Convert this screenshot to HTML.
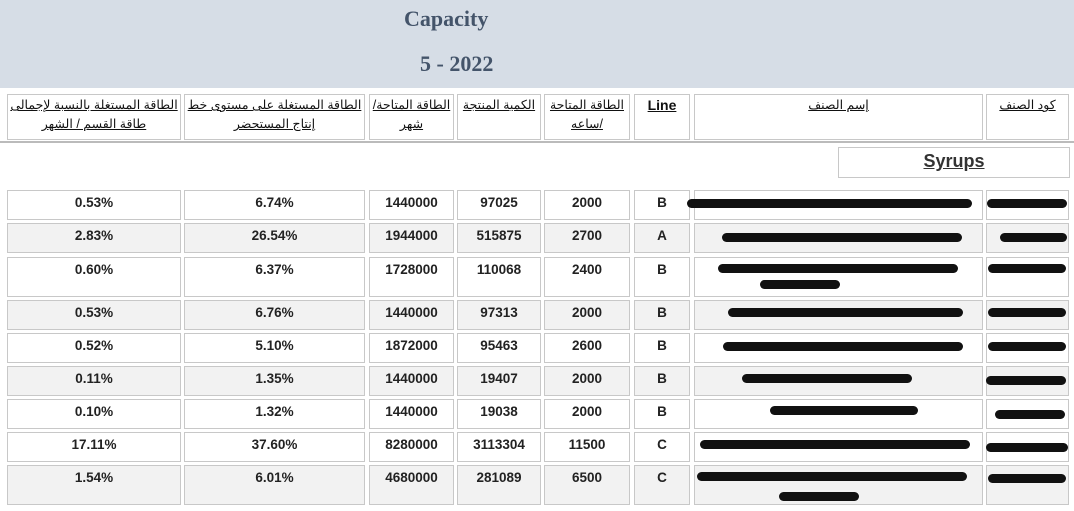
<!DOCTYPE html>
<html><head><meta charset="utf-8"><style>
*{margin:0;padding:0;box-sizing:border-box}
body{width:1074px;height:511px;background:#fff;position:relative;overflow:hidden;font-family:"Liberation Sans",Arial,sans-serif}
.band{position:absolute;left:0;top:0;width:1074px;height:88px;background:#d6dde6}
.t{position:absolute;font-family:"Liberation Serif",serif;font-weight:bold;color:#44546a;font-size:22px}
.c{position:absolute;border:1px solid #c8c8c8;text-align:center;font-weight:bold;font-size:13.5px;color:#222;padding-top:4px}
.h{position:absolute;border:1px solid #c8c8c8;text-align:center;font-size:12.5px;color:#111;font-family:"Liberation Sans","Noto Sans CJK SC",sans-serif;line-height:19px;padding-top:1px}
.h span{text-decoration:underline}
.g{background:#f2f2f2}
.bar{position:absolute;height:9px;background:#111;border-radius:5px}
.sep{position:absolute;left:0;width:1074px;height:2px;background:#bbb;top:141px}
</style></head><body>
<div class="band"></div>
<div class="t" style="left:404px;top:6px">Capacity</div>
<div class="t" style="left:420px;top:51px">5 - 2022</div>

<div class="h" dir="rtl" style="left:7px;top:94px;width:174px;height:46px"><span>الطاقة المستغلة بالنسبة لإجمالى<br>طاقة القسم / الشهر</span></div>
<div class="h" dir="rtl" style="left:184px;top:94px;width:181px;height:46px"><span>الطاقة المستغلة على مستوى خط<br>إنتاج المستحضر</span></div>
<div class="h" dir="rtl" style="left:369px;top:94px;width:85px;height:46px"><span>الطاقة المتاحة/<br>شهر</span></div>
<div class="h" dir="rtl" style="left:457px;top:94px;width:84px;height:46px"><span>الكمية المنتجة</span></div>
<div class="h" dir="rtl" style="left:544px;top:94px;width:86px;height:46px"><span>الطاقة المتاحة<br>/ساعه</span></div>
<div class="h" style="left:634px;top:94px;width:56px;height:46px;font-weight:bold;font-size:14px"><span>Line</span></div>
<div class="h" dir="rtl" style="left:694px;top:94px;width:289px;height:46px"><span>إسم الصنف</span></div>
<div class="h" dir="rtl" style="left:986px;top:94px;width:83px;height:46px"><span>كود الصنف</span></div>
<div class="sep"></div>
<div class="c" style="left:838px;top:147px;width:232px;height:31px;font-size:18px;padding-top:3px;color:#333"><span style="text-decoration:underline">Syrups</span></div>

<div class="c" style="left:7px;top:190px;width:174px;height:30px">0.53%</div><div class="c" style="left:184px;top:190px;width:181px;height:30px">6.74%</div><div class="c" style="left:369px;top:190px;width:85px;height:30px">1440000</div><div class="c" style="left:457px;top:190px;width:84px;height:30px">97025</div><div class="c" style="left:544px;top:190px;width:86px;height:30px">2000</div><div class="c" style="left:634px;top:190px;width:56px;height:30px">B</div><div class="c" style="left:694px;top:190px;width:289px;height:30px"></div><div class="c" style="left:986px;top:190px;width:83px;height:30px"></div>
<div class="c g" style="left:7px;top:223px;width:174px;height:30px">2.83%</div><div class="c g" style="left:184px;top:223px;width:181px;height:30px">26.54%</div><div class="c g" style="left:369px;top:223px;width:85px;height:30px">1944000</div><div class="c g" style="left:457px;top:223px;width:84px;height:30px">515875</div><div class="c g" style="left:544px;top:223px;width:86px;height:30px">2700</div><div class="c g" style="left:634px;top:223px;width:56px;height:30px">A</div><div class="c g" style="left:694px;top:223px;width:289px;height:30px"></div><div class="c g" style="left:986px;top:223px;width:83px;height:30px"></div>
<div class="c" style="left:7px;top:257px;width:174px;height:40px">0.60%</div><div class="c" style="left:184px;top:257px;width:181px;height:40px">6.37%</div><div class="c" style="left:369px;top:257px;width:85px;height:40px">1728000</div><div class="c" style="left:457px;top:257px;width:84px;height:40px">110068</div><div class="c" style="left:544px;top:257px;width:86px;height:40px">2400</div><div class="c" style="left:634px;top:257px;width:56px;height:40px">B</div><div class="c" style="left:694px;top:257px;width:289px;height:40px"></div><div class="c" style="left:986px;top:257px;width:83px;height:40px"></div>
<div class="c g" style="left:7px;top:300px;width:174px;height:30px">0.53%</div><div class="c g" style="left:184px;top:300px;width:181px;height:30px">6.76%</div><div class="c g" style="left:369px;top:300px;width:85px;height:30px">1440000</div><div class="c g" style="left:457px;top:300px;width:84px;height:30px">97313</div><div class="c g" style="left:544px;top:300px;width:86px;height:30px">2000</div><div class="c g" style="left:634px;top:300px;width:56px;height:30px">B</div><div class="c g" style="left:694px;top:300px;width:289px;height:30px"></div><div class="c g" style="left:986px;top:300px;width:83px;height:30px"></div>
<div class="c" style="left:7px;top:333px;width:174px;height:30px">0.52%</div><div class="c" style="left:184px;top:333px;width:181px;height:30px">5.10%</div><div class="c" style="left:369px;top:333px;width:85px;height:30px">1872000</div><div class="c" style="left:457px;top:333px;width:84px;height:30px">95463</div><div class="c" style="left:544px;top:333px;width:86px;height:30px">2600</div><div class="c" style="left:634px;top:333px;width:56px;height:30px">B</div><div class="c" style="left:694px;top:333px;width:289px;height:30px"></div><div class="c" style="left:986px;top:333px;width:83px;height:30px"></div>
<div class="c g" style="left:7px;top:366px;width:174px;height:30px">0.11%</div><div class="c g" style="left:184px;top:366px;width:181px;height:30px">1.35%</div><div class="c g" style="left:369px;top:366px;width:85px;height:30px">1440000</div><div class="c g" style="left:457px;top:366px;width:84px;height:30px">19407</div><div class="c g" style="left:544px;top:366px;width:86px;height:30px">2000</div><div class="c g" style="left:634px;top:366px;width:56px;height:30px">B</div><div class="c g" style="left:694px;top:366px;width:289px;height:30px"></div><div class="c g" style="left:986px;top:366px;width:83px;height:30px"></div>
<div class="c" style="left:7px;top:399px;width:174px;height:30px">0.10%</div><div class="c" style="left:184px;top:399px;width:181px;height:30px">1.32%</div><div class="c" style="left:369px;top:399px;width:85px;height:30px">1440000</div><div class="c" style="left:457px;top:399px;width:84px;height:30px">19038</div><div class="c" style="left:544px;top:399px;width:86px;height:30px">2000</div><div class="c" style="left:634px;top:399px;width:56px;height:30px">B</div><div class="c" style="left:694px;top:399px;width:289px;height:30px"></div><div class="c" style="left:986px;top:399px;width:83px;height:30px"></div>
<div class="c" style="left:7px;top:432px;width:174px;height:30px">17.11%</div><div class="c" style="left:184px;top:432px;width:181px;height:30px">37.60%</div><div class="c" style="left:369px;top:432px;width:85px;height:30px">8280000</div><div class="c" style="left:457px;top:432px;width:84px;height:30px">3113304</div><div class="c" style="left:544px;top:432px;width:86px;height:30px">11500</div><div class="c" style="left:634px;top:432px;width:56px;height:30px">C</div><div class="c" style="left:694px;top:432px;width:289px;height:30px"></div><div class="c" style="left:986px;top:432px;width:83px;height:30px"></div>
<div class="c g" style="left:7px;top:465px;width:174px;height:40px">1.54%</div><div class="c g" style="left:184px;top:465px;width:181px;height:40px">6.01%</div><div class="c g" style="left:369px;top:465px;width:85px;height:40px">4680000</div><div class="c g" style="left:457px;top:465px;width:84px;height:40px">281089</div><div class="c g" style="left:544px;top:465px;width:86px;height:40px">6500</div><div class="c g" style="left:634px;top:465px;width:56px;height:40px">C</div><div class="c g" style="left:694px;top:465px;width:289px;height:40px"></div><div class="c g" style="left:986px;top:465px;width:83px;height:40px"></div>

<div class="bar" style="left:687px;top:199px;width:285px"></div><div class="bar" style="left:987px;top:199px;width:80px"></div>
<div class="bar" style="left:722px;top:233px;width:240px"></div><div class="bar" style="left:1000px;top:233px;width:67px"></div>
<div class="bar" style="left:718px;top:264px;width:240px"></div><div class="bar" style="left:760px;top:280px;width:80px"></div><div class="bar" style="left:988px;top:264px;width:78px"></div>
<div class="bar" style="left:728px;top:308px;width:235px"></div><div class="bar" style="left:988px;top:308px;width:78px"></div>
<div class="bar" style="left:723px;top:342px;width:240px"></div><div class="bar" style="left:988px;top:342px;width:78px"></div>
<div class="bar" style="left:742px;top:374px;width:170px"></div><div class="bar" style="left:986px;top:376px;width:80px"></div>
<div class="bar" style="left:770px;top:406px;width:148px"></div><div class="bar" style="left:995px;top:410px;width:70px"></div>
<div class="bar" style="left:700px;top:440px;width:270px"></div><div class="bar" style="left:986px;top:443px;width:82px"></div>
<div class="bar" style="left:697px;top:472px;width:270px"></div><div class="bar" style="left:779px;top:492px;width:80px"></div><div class="bar" style="left:988px;top:474px;width:78px"></div>
</body></html>
